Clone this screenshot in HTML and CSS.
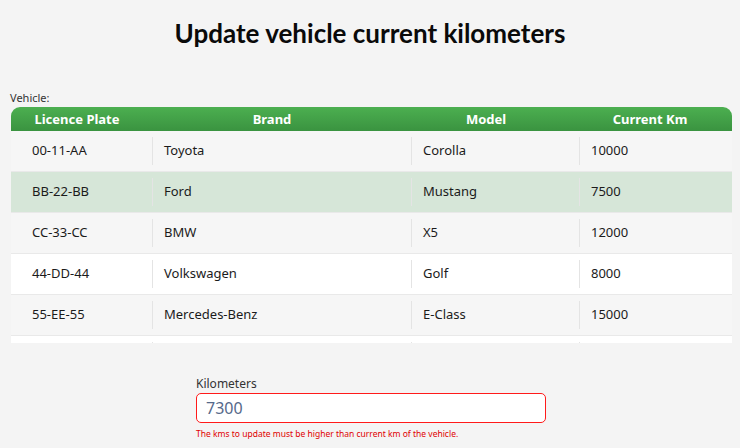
FILE: index.html
```html
<!DOCTYPE html>
<html lang="en">
<head>
<meta charset="utf-8">
<title>Update vehicle current kilometers</title>
<link rel="stylesheet" href="styles.css">
</head>
<body>
<h1 class="title">Update vehicle current kilometers</h1>
<div class="vehicle-label">Vehicle:</div>
<div class="table">
  <div class="thead">
    <div>Licence Plate</div>
    <div>Brand</div>
    <div>Model</div>
    <div>Current Km</div>
  </div>
  <div class="tbody">
    <div class="row odd"><div class="cell first">00-11-AA</div><div class="cell">Toyota</div><div class="cell">Corolla</div><div class="cell">10000</div></div>
    <div class="row selected"><div class="cell first">BB-22-BB</div><div class="cell">Ford</div><div class="cell">Mustang</div><div class="cell">7500</div></div>
    <div class="row odd"><div class="cell first">CC-33-CC</div><div class="cell">BMW</div><div class="cell">X5</div><div class="cell">12000</div></div>
    <div class="row"><div class="cell first">44-DD-44</div><div class="cell">Volkswagen</div><div class="cell">Golf</div><div class="cell">8000</div></div>
    <div class="row odd"><div class="cell first">55-EE-55</div><div class="cell">Mercedes-Benz</div><div class="cell">E-Class</div><div class="cell">15000</div></div>
    <div class="row"><div class="cell first"></div><div class="cell"></div><div class="cell"></div><div class="cell"></div></div>
  </div>
</div>
<div class="form">
  <label class="field-label" for="km">Kilometers</label>
  <input id="km" class="field-input" type="text" value="7300">
  <div class="field-error">The kms to update must be higher than current km of the vehicle.</div>
</div>
</body>
</html>
```
FILE: styles.css
```css
html, body {
  margin: 0;
  padding: 0;
  background: #f4f4f4;
  font-family: "Noto Sans", "Open Sans", sans-serif;
  color: #1b1b1b;
}
.title {
  margin: 0;
  padding-top: 16px;
  height: 52px;
  box-sizing: border-box;
  text-align: center;
  font-family: "Lato", sans-serif;
  font-weight: 700;
  font-size: 26px;
  line-height: 34px;
  color: #0a0a0a;
}
.vehicle-label {
  margin: 38px 0 0 10px;
  font-size: 11px;
  line-height: 15px;
  color: #333;
}
.table {
  margin: 2px 8px 0 11px;
  height: 236px;
  overflow: hidden;
  background: #fff;
  border-radius: 9px 9px 0 0;
}
.thead {
  display: grid;
  grid-template-columns: 132px 258px 170px 1fr;
  padding-right: 3px;
  height: 24px;
  background: linear-gradient(#4caf50, #3a9340);
  color: #fff;
  font-weight: 700;
  font-size: 13px;
  line-height: 24px;
  text-align: center;
}
.row {
  display: grid;
  grid-template-columns: 141px 259px 168px 1fr;
  height: 41px;
  box-sizing: border-box;
  border-bottom: 1px solid #e9e9e9;
  background: #fff;
  font-size: 13px;
}
.row.odd { background: #f6f6f6; }
.row.selected { background: #d6e6d8; }
.cell {
  margin: 6px 0;
  padding-left: 11px;
  padding-bottom: 3px;
  border-left: 1px solid #e4e4e4;
  display: flex;
  align-items: center;
  white-space: nowrap;
}
.cell.first {
  border-left: none;
  padding-left: 21px;
}
.form {
  width: 350px;
  margin: 34px auto 0;
  padding-left: 2px;
  display: flex;
  flex-direction: column;
}
.field-label {
  font-size: 12px;
  line-height: 14px;
  color: #333;
  margin-bottom: 2px;
}
.field-input {
  height: 30px;
  box-sizing: border-box;
  border: 1px solid #ff1a1a;
  border-radius: 5px;
  background: #fff;
  padding: 0 9px;
  font-family: "Noto Sans", sans-serif;
  font-size: 16px;
  color: #56698a;
  outline: none;
}
.field-error {
  margin-top: 5px;
  font-size: 8.5px;
  color: #e00000;
}
```
